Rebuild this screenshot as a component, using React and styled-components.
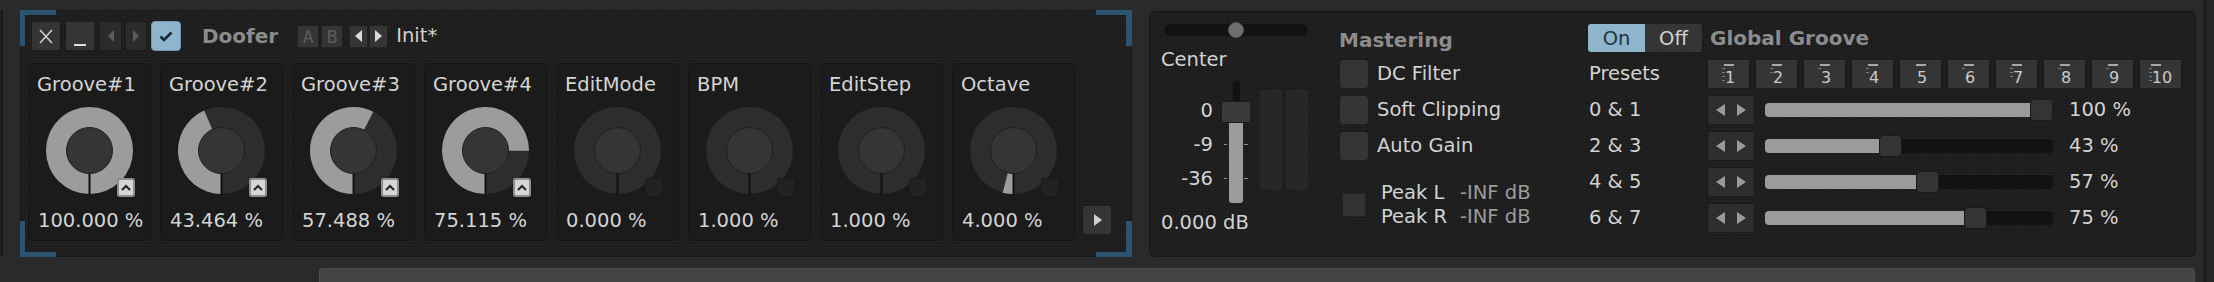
import React from "react";
import styled, { createGlobalStyle } from "styled-components";

const GlobalStyle = createGlobalStyle`
  html, body {
    margin: 0;
    padding: 0;
    background: #2a2a2a;
  }
  body {
    font-family: "DejaVu Sans", "Noto Sans", sans-serif;
    color: #d2d2d2;
    overflow: hidden;
  }
  * {
    box-sizing: border-box;
  }
`;

const texture = `
  background-color: #202020;
  background-image: radial-gradient(rgba(0, 0, 0, 0.35) 0.7px, transparent 0.9px);
  background-size: 3px 3px;
`;

const grooves = [
  { name: "Groove#1", value: 100, text: "100.000 %", tab: true },
  { name: "Groove#2", value: 43.464, text: "43.464 %", tab: true },
  { name: "Groove#3", value: 57.488, text: "57.488 %", tab: true },
  { name: "Groove#4", value: 75.115, text: "75.115 %", tab: true },
  { name: "EditMode", value: 0, text: "0.000 %" },
  { name: "BPM", value: 0, text: "1.000 %" },
  { name: "EditStep", value: 0, text: "1.000 %" },
  { name: "Octave", value: 4, text: "4.000 %" },
];

const presetDashes = [4, 2, 1, 2, 0, 1, 3, 1, 1, 4];

const grooveRows = [
  { label: "0 & 1", value: 100 },
  { label: "2 & 3", value: 43 },
  { label: "4 & 5", value: 57 },
  { label: "6 & 7", value: 75 },
];

/* ---------- small drawings ---------- */

const Tri = ({ dir = "right", color = "#cfcfcf", w = 7, h = 12 }) => (
  <svg width={w} height={h} viewBox={`0 0 ${w} ${h}`}>
    {dir === "right" ? (
      <polygon points={`0,0 ${w},${h / 2} 0,${h}`} fill={color} />
    ) : (
      <polygon points={`${w},0 0,${h / 2} ${w},${h}`} fill={color} />
    )}
  </svg>
);

const polar = (c, r, deg) => {
  const a = (deg * Math.PI) / 180;
  return [c - r * Math.sin(a), c + r * Math.cos(a)];
};

const Dial = ({ value }) => {
  const c = 43.5;
  const R = 43.5;
  const r = 23;
  let arc = null;
  if (value >= 99.99) {
    arc = <circle cx={c} cy={c} r={R} fill="#9c9c9c" />;
  } else if (value > 0) {
    const deg = value * 3.6;
    const [x0, y0] = polar(c, R, 0);
    const [x1, y1] = polar(c, R, deg);
    arc = (
      <path
        d={`M${c} ${c} L${x0} ${y0} A${R} ${R} 0 ${deg > 180 ? 1 : 0} 1 ${x1} ${y1} Z`}
        fill="#9c9c9c"
      />
    );
  }
  return (
    <svg width="87" height="87" viewBox="0 0 87 87">
      <circle cx={c} cy={c} r={R} fill="#2d2d2d" />
      {arc}
      <circle cx={c} cy={c} r={r} fill="#353535" stroke="#1f1f1f" strokeWidth="1" />
      <line x1={c} y1={c + r} x2={c} y2={c + R} stroke="#111" strokeWidth="2" />
    </svg>
  );
};

/* ---------- layout ---------- */

const Page = styled.div`
  display: flex;
  width: 2214px;
  height: 282px;
  overflow: hidden;
`;

const Main = styled.div`
  display: flex;
  flex-direction: column;
  width: 2203px;
`;

const TopRow = styled.div`
  display: flex;
  align-items: flex-start;
  height: 268px;
`;

const PrevStub = styled.div`
  margin-top: 10px;
  width: 3px;
  height: 246px;
  ${texture}
  border-right: 1px solid #161616;
  border-bottom: 1px solid #161616;
  border-radius: 0 0 4px 0;
`;

const RightStrip = styled.div`
  width: 11px;
  height: 282px;
  background: #262626;
  border-left: 4px solid #1d1d1d;
`;

const BottomBar = styled.div`
  margin-left: 319px;
  width: 1876px;
  height: 14px;
  background: #444;
  border: 1px solid #4e4e4e;
  border-bottom: none;
  border-radius: 4px 4px 0 0;
`;

/* ---------- device (Doofer) ---------- */

const DevicePanel = styled.section`
  position: relative;
  margin: 10px 0 0 17px;
  width: 1112px;
  height: 247px;
  ${texture}
  border: 1px solid #161616;
  padding: 10px 0 0 7px;
`;

const Bracket = styled.span`
  position: absolute;
  width: 36px;
  height: 36px;
  border: 0 solid #2b5472;
  ${({ $pos }) => ($pos.includes("t") ? "top: -1px; border-top-width: 5px;" : "bottom: -1px; border-bottom-width: 5px;")}
  ${({ $pos }) => ($pos.includes("l") ? "left: -1px; border-left-width: 5px;" : "right: -1px; border-right-width: 6px;")}
`;

const Header = styled.div`
  display: flex;
  align-items: center;
  height: 30px;
  margin-left: 3px;
`;

const HeadBtn = styled.button`
  display: flex;
  align-items: center;
  justify-content: center;
  width: ${({ $w }) => $w}px;
  height: 30px;
  margin-left: ${({ $ml = 0 }) => $ml}px;
  padding: 0;
  background: ${({ $dim }) => ($dim ? "#2b2b2b" : "#353535")};
  border: 1px solid #1c1c1c;
  border-radius: 2px;
`;

const Underscore = styled.span`
  width: 12px;
  height: 2px;
  margin-top: 18px;
  background: #dcdcdc;
`;

const CheckBtn = styled(HeadBtn)`
  background: #8db5cc;
  border-color: #6f97ad;
  border-radius: 4px;
`;

const DeviceName = styled.span`
  margin-left: 21px;
  font-size: 20px;
  font-weight: bold;
  color: #8c8c8c;
  line-height: 24px;
`;

const SmallBtn = styled.span`
  display: flex;
  align-items: center;
  justify-content: center;
  width: ${({ $w }) => $w}px;
  height: 23px;
  margin-left: ${({ $ml = 0 }) => $ml}px;
  background: #353535;
  border: 1px solid #222;
  font-family: "DejaVu Sans Mono", monospace;
  font-size: 18px;
  color: #5c5c5c;
`;

const PresetName = styled.span`
  margin-left: 8px;
  font-size: 19.5px;
  line-height: 24px;
  color: #d2d2d2;
`;

const CardRow = styled.div`
  display: flex;
  align-items: flex-end;
  gap: 9px;
  margin-top: 12px;
`;

const Card = styled.div`
  display: flex;
  flex-direction: column;
  width: 123px;
  height: 178px;
  padding: 9px 8px 0 8px;
  background: #1b1b1b;
  border: 1px solid #151515;
  border-radius: 5px;
`;

const CardLabel = styled.div`
  font-size: 19.5px;
  line-height: 24px;
  color: #d4d4d4;
  white-space: nowrap;
`;

const CardValue = styled(CardLabel)`
  margin-top: 15px;
  padding-left: 1px;
`;

const KnobWrap = styled.div`
  position: relative;
  align-self: center;
  width: 87px;
  height: 87px;
  margin-top: 10px;
`;

const KnobTab = styled.span`
  position: absolute;
  right: -2px;
  bottom: -3px;
  display: flex;
  align-items: center;
  justify-content: center;
  width: 18px;
  height: 19px;
  border-radius: 3px;
  background: ${({ $on }) => ($on ? "#d6d6d6" : "#222")};
  border: ${({ $on }) => ($on ? "2px solid #8e8e8e" : "1px solid #1a1a1a")};
`;

const PlayBtn = styled.button`
  display: flex;
  align-items: center;
  justify-content: center;
  width: 30px;
  height: 30px;
  margin: 0 0 6px -2px;
  padding: 0 0 0 2px;
  background: #353535;
  border: 1px solid #1c1c1c;
  border-radius: 3px;
`;

/* ---------- mixer / mastering / groove ---------- */

const MixerPanel = styled.section`
  display: flex;
  align-items: flex-start;
  margin: 11px 0 0 17px;
  width: 1047px;
  height: 246px;
  ${texture}
  border: 1px solid #161616;
  border-radius: 6px;
`;

const Column = styled.div`
  display: flex;
  flex-direction: column;
  width: ${({ $w }) => $w}px;
  padding-top: ${({ $pt }) => $pt}px;
  margin-left: ${({ $ml = 0 }) => $ml}px;
`;

const Text = styled.div`
  font-size: 19.5px;
  line-height: 24px;
  color: ${({ $dim }) => ($dim ? "#9c9c9c" : "#d2d2d2")};
  margin-top: ${({ $mt = 0 }) => $mt}px;
  white-space: nowrap;
`;

const Heading = styled.div`
  font-size: 20px;
  font-weight: bold;
  line-height: 24px;
  color: #8c8c8c;
  white-space: nowrap;
`;

const PanTrack = styled.div`
  position: relative;
  width: 144px;
  height: 12px;
  margin: 2px 0 2px 3px;
  background: #121212;
  border-radius: 6px;
`;

const PanKnob = styled.span`
  position: absolute;
  left: 64px;
  top: -2px;
  width: 16px;
  height: 16px;
  border-radius: 50%;
  background: #6e6e6e;
  border: 1px solid #5a5a5a;
`;

const FaderArea = styled.div`
  display: flex;
  align-items: flex-start;
  height: 123px;
  margin-top: 8px;
`;

const Scale = styled.div`
  display: flex;
  flex-direction: column;
  align-items: flex-end;
  gap: 10px;
  width: 52px;
  padding-top: 19px;
  font-size: 19.5px;
  line-height: 24px;
  color: #d2d2d2;
`;

const Fader = styled.div`
  display: flex;
  flex-direction: column;
  align-items: center;
  width: 30px;
  margin-left: 8px;
`;

const FaderTop = styled.span`
  width: 7px;
  height: 21px;
  background: #121212;
  border-radius: 4px 4px 0 0;
`;

const FaderThumb = styled.span`
  width: 30px;
  height: 22px;
  background: #3a3a3a;
  border: 1px solid #1c1c1c;
  border-radius: 3px;
`;

const FaderFill = styled.span`
  position: relative;
  width: 14px;
  height: 80px;
  background: #9b9b9b;
  border-radius: 0 0 3px 3px;
`;

const Tick = styled.span`
  position: absolute;
  top: ${({ $y }) => $y}px;
  left: -5px;
  width: 24px;
  height: 1px;
  background: linear-gradient(to right, #8a8a8a 0 3px, transparent 3px 20px, #8a8a8a 20px);
`;

const Meters = styled.div`
  display: flex;
  gap: 4px;
  margin: 10px 0 0 9px;
`;

const Meter = styled.span`
  width: 22px;
  height: 100px;
  background: #272727;
`;

const CheckList = styled.div`
  display: flex;
  flex-direction: column;
  gap: 6px;
  margin-top: 7px;
`;

const CheckRow = styled.label`
  display: flex;
  align-items: center;
  gap: 8px;
  font-size: 19.5px;
  line-height: 24px;
  color: #d2d2d2;
`;

const CheckBox = styled.span`
  width: 30px;
  height: 30px;
  background: #353535;
  border: 1px solid #1c1c1c;
  border-radius: 4px;
`;

const PeakRow = styled.div`
  display: flex;
  align-items: center;
  margin-top: 20px;
`;

const PeakLed = styled.span`
  width: 24px;
  height: 24px;
  margin-left: 3px;
  background: #333;
  border: 1px solid #242424;
`;

const PeakGrid = styled.div`
  display: grid;
  grid-template-columns: 79px auto;
  margin-left: 15px;
  font-size: 19.5px;
  line-height: 22px;
`;

const TitleRow = styled.div`
  display: flex;
  align-items: center;
  height: 30px;
`;

const Toggle = styled.div`
  display: flex;
  border: 1px solid #1c1c1c;
  border-radius: 4px;
  overflow: hidden;
  margin-right: 7px;
`;

const ToggleSeg = styled.span`
  width: 57px;
  height: 28px;
  display: flex;
  align-items: center;
  justify-content: center;
  font-size: 19.5px;
  background: ${({ $on }) => ($on ? "#8db5cc" : "#353535")};
  color: ${({ $on }) => ($on ? "#26333c" : "#d2d2d2")};
`;

const GrooveRow = styled.div`
  display: flex;
  align-items: center;
  height: 30px;
  margin-top: 6px;
`;

const RowLabel = styled.span`
  width: 120px;
  padding-left: 2px;
  font-size: 19.5px;
  line-height: 24px;
  color: #d2d2d2;
`;

const PresetBtns = styled.div`
  display: flex;
  gap: 5px;
`;

const PresetBtn = styled.span`
  display: flex;
  justify-content: center;
  width: 43px;
  height: 30px;
  padding-left: 3px;
  background: #353535;
  border: 1px solid #1c1c1c;
`;

const PresetGlyph = styled.span`
  position: relative;
  margin-top: 10px;
  font-size: 16px;
  line-height: 16px;
  color: #cacaca;
`;

const GlyphBar = styled.span`
  position: absolute;
  top: -6px;
  left: -1px;
  width: 10px;
  height: 2px;
  background: #a8a8a8;
`;

const GlyphDashes = styled.span`
  position: absolute;
  top: -2px;
  left: -3px;
  width: 3px;
  height: ${({ $n }) => $n * 4}px;
  background: repeating-linear-gradient(#7a7a7a 0 1.5px, transparent 1.5px 4px);
`;

const ArrowBtn = styled.span`
  display: flex;
  align-items: center;
  justify-content: center;
  gap: 12px;
  width: 48px;
  height: 30px;
  background: #2d2d2d;
  border: 1px solid #1a1a1a;
  border-radius: 3px;
`;

const Track = styled.div`
  position: relative;
  width: 288px;
  height: 14px;
  margin-left: 10px;
  background: #111;
  border-radius: 4px;
`;

const TrackFill = styled.span`
  position: absolute;
  left: 0;
  top: 0;
  bottom: 0;
  background: #9b9b9b;
  border-radius: 4px 0 0 4px;
`;

const TrackThumb = styled.span`
  position: absolute;
  top: -4px;
  width: 23px;
  height: 22px;
  background: #343434;
  border: 1px solid #1a1a1a;
  border-radius: 4px;
`;

const RowValue = styled.span`
  margin-left: 16px;
  font-size: 19.5px;
  line-height: 24px;
  color: #d2d2d2;
`;

/* ---------- parts ---------- */

const KnobCard = ({ name, value, text, tab }) => (
  <Card>
    <CardLabel>{name}</CardLabel>
    <KnobWrap>
      <Dial value={value} />
      <KnobTab $on={tab}>
        {tab && (
          <svg width="10" height="7" viewBox="0 0 10 7">
            <polyline points="1,6 5,2 9,6" fill="none" stroke="#222" strokeWidth="2" />
          </svg>
        )}
      </KnobTab>
    </KnobWrap>
    <CardValue>{text}</CardValue>
  </Card>
);

const GrooveSlider = ({ label, value }) => {
  const left = (value / 100) * (288 - 23);
  return (
    <GrooveRow>
      <RowLabel>{label}</RowLabel>
      <ArrowBtn>
        <Tri dir="left" color="#9a9a9a" w={9} h={12} />
        <Tri dir="right" color="#9a9a9a" w={9} h={12} />
      </ArrowBtn>
      <Track>
        <TrackFill style={{ width: left + 12 }} />
        <TrackThumb style={{ left }} />
      </Track>
      <RowValue>{value} %</RowValue>
    </GrooveRow>
  );
};

export default function App() {
  return (
    <>
      <GlobalStyle />
      <Page>
        <Main>
          <TopRow>
            <PrevStub />
            <DevicePanel>
              <Bracket $pos="tl" />
              <Bracket $pos="tr" />
              <Bracket $pos="bl" />
              <Bracket $pos="br" />
              <Header>
                <HeadBtn $w={30}>
                  <svg width="14" height="15" viewBox="0 0 14 15">
                    <path d="M1 1 L13 14 M13 1 L1 14" stroke="#cfcfcf" strokeWidth="1.6" />
                  </svg>
                </HeadBtn>
                <HeadBtn $w={30} $ml={4}>
                  <Underscore />
                </HeadBtn>
                <HeadBtn $w={23} $ml={4} $dim>
                  <Tri dir="left" color="#5a5a5a" w={6} h={12} />
                </HeadBtn>
                <HeadBtn $w={22} $ml={3} $dim>
                  <Tri dir="right" color="#5a5a5a" w={6} h={12} />
                </HeadBtn>
                <CheckBtn $w={30} $ml={4}>
                  <svg width="14" height="11" viewBox="0 0 14 11">
                    <polyline points="1.5,5.5 5,9 12.5,1.5" fill="none" stroke="#1c2630" strokeWidth="2.6" />
                  </svg>
                </CheckBtn>
                <DeviceName>Doofer</DeviceName>
                <SmallBtn $w={22} $ml={19}>A</SmallBtn>
                <SmallBtn $w={22} $ml={2}>B</SmallBtn>
                <SmallBtn $w={19} $ml={6}>
                  <Tri dir="left" color="#dadada" w={7} h={12} />
                </SmallBtn>
                <SmallBtn $w={19} $ml={1}>
                  <Tri dir="right" color="#dadada" w={7} h={12} />
                </SmallBtn>
                <PresetName>Init*</PresetName>
              </Header>
              <CardRow>
                {grooves.map((g) => (
                  <KnobCard key={g.name} {...g} />
                ))}
                <PlayBtn>
                  <Tri dir="right" color="#cfcfcf" w={8} h={12} />
                </PlayBtn>
              </CardRow>
            </DevicePanel>

            <MixerPanel>
              <Column $w={147} $pt={10} $ml={11}>
                <PanTrack>
                  <PanKnob />
                </PanTrack>
                <Text $mt={10}>Center</Text>
                <FaderArea>
                  <Scale>
                    <span>0</span>
                    <span>-9</span>
                    <span>-36</span>
                  </Scale>
                  <Fader>
                    <FaderTop />
                    <FaderThumb />
                    <FaderFill>
                      <Tick $y={21} />
                      <Tick $y={55} />
                    </FaderFill>
                  </Fader>
                  <Meters>
                    <Meter />
                    <Meter />
                  </Meters>
                </FaderArea>
                <Text $mt={8}>0.000 dB</Text>
              </Column>

              <Column $w={248} $pt={16} $ml={31}>
                <Heading>Mastering</Heading>
                <CheckList>
                  <CheckRow>
                    <CheckBox />
                    DC Filter
                  </CheckRow>
                  <CheckRow>
                    <CheckBox />
                    Soft Clipping
                  </CheckRow>
                  <CheckRow>
                    <CheckBox />
                    Auto Gain
                  </CheckRow>
                </CheckList>
                <PeakRow>
                  <PeakLed />
                  <PeakGrid>
                    <Text>Peak L</Text>
                    <Text $dim>-INF dB</Text>
                    <Text>Peak R</Text>
                    <Text $dim>-INF dB</Text>
                  </PeakGrid>
                </PeakRow>
              </Column>

              <Column $w={600} $pt={11}>
                <TitleRow>
                  <Toggle>
                    <ToggleSeg $on>On</ToggleSeg>
                    <ToggleSeg>Off</ToggleSeg>
                  </Toggle>
                  <Heading>Global Groove</Heading>
                </TitleRow>
                <GrooveRow>
                  <RowLabel>Presets</RowLabel>
                  <PresetBtns>
                    {presetDashes.map((n, i) => (
                      <PresetBtn key={i}>
                        <PresetGlyph>
                          <GlyphBar />
                          {n > 0 && <GlyphDashes $n={n} />}
                          {i + 1}
                        </PresetGlyph>
                      </PresetBtn>
                    ))}
                  </PresetBtns>
                </GrooveRow>
                {grooveRows.map((r) => (
                  <GrooveSlider key={r.label} {...r} />
                ))}
              </Column>
            </MixerPanel>
          </TopRow>
          <BottomBar />
        </Main>
        <RightStrip />
      </Page>
    </>
  );
}
